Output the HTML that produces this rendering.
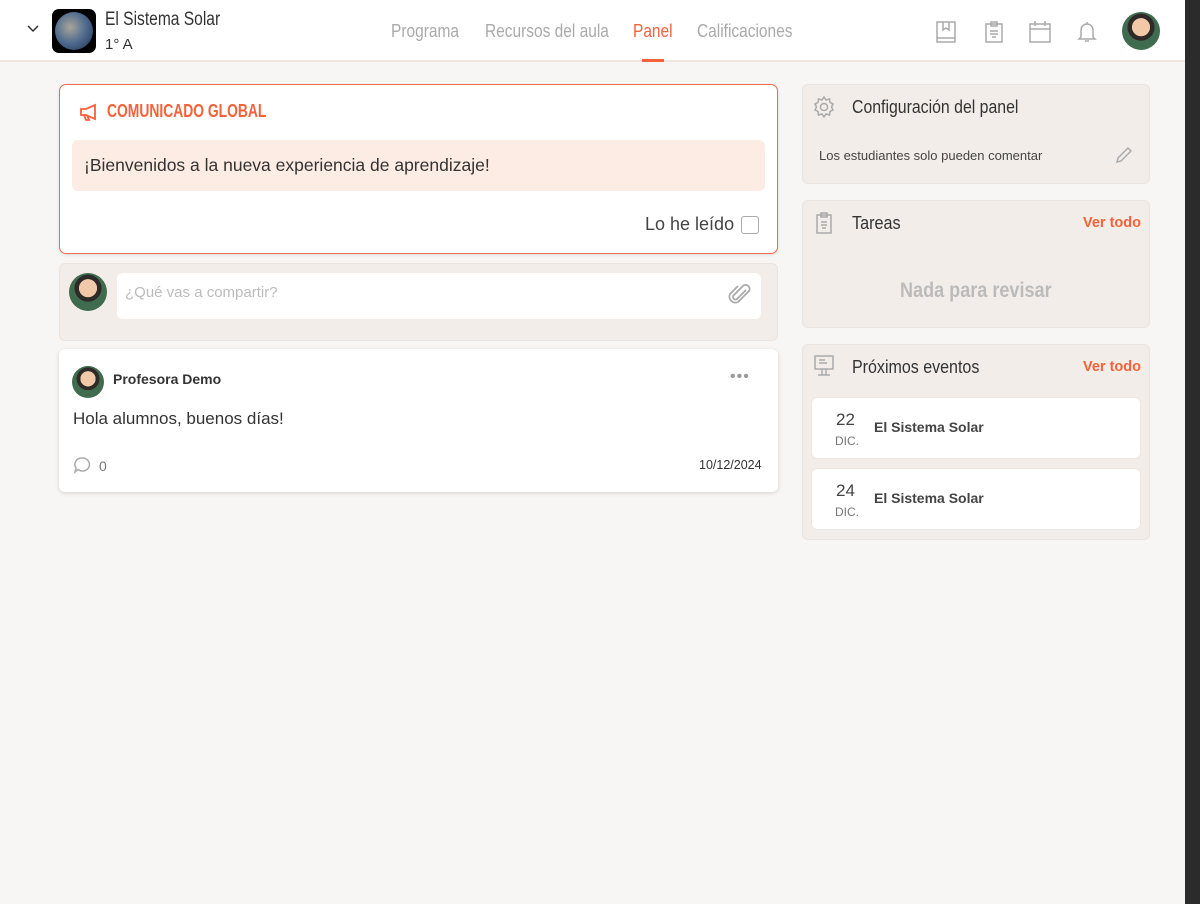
<!DOCTYPE html>
<html><head><meta charset="utf-8"><style>
*{margin:0;padding:0;box-sizing:border-box}
body{width:1200px;height:904px;background:#f8f6f4;font-family:"Liberation Sans",sans-serif;color:#333;position:relative;overflow:hidden}
.n{transform-origin:0 0;white-space:nowrap}
.a{position:absolute}
.hdr{left:0;top:0;width:1185px;height:62px;background:#fff;border-bottom:2px solid #efe6e0}
.strip{left:1185px;top:0;width:15px;height:904px;background:#2b2b2b}
.nav{font-size:18px;color:#aaa;top:21px;transform:scaleX(.86)}
.card{background:#f3ede9;border:1px solid #ebe3de;border-radius:6px}
.wc{background:#fff;border-radius:6px}
.av{border-radius:50%;background:radial-gradient(circle at 50% 40%,#f2c9a8 0 30%,#2e2a28 31% 45%,#3f6b4f 46%);overflow:hidden}
.ico{stroke:#aaa;fill:none;stroke-width:1.5}
.or{color:#f4623a}
</style></head><body>
<div class="a hdr"></div>
<div class="a strip"></div>
<svg class="a" style="left:27px;top:25px" width="12" height="8"><path d="M1 1l5 5 5-5" stroke="#333" stroke-width="1.5" fill="none"/></svg>
<div class="a" style="left:52px;top:9px;width:44px;height:44px;border-radius:7px;background:#000"><div style="margin:3px;width:38px;height:38px;border-radius:50%;background:radial-gradient(circle at 40% 40%,#a8a59a,#4d6a8e 50%,#1f2f4e)"></div></div>
<div class="a n" style="left:105px;top:9px;font-size:19px;color:#333;transform:scaleX(.82)">El Sistema Solar</div>
<div class="a" style="left:105px;top:36px;font-size:15px;color:#333">1° A</div>
<div class="a nav n" style="left:391px">Programa</div>
<div class="a nav n" style="left:485px">Recursos del aula</div>
<div class="a nav n" style="left:633px;color:#f4623a">Panel</div>
<div class="a" style="left:642px;top:59px;width:22px;height:3px;background:#f4623a"></div>
<div class="a nav n" style="left:697px">Calificaciones</div>
<svg class="a ico" style="left:934px;top:20px" width="24" height="24"><path d="M3 2h18v20H3zM3 18h18M9 2v8l3-2 3 2V2"/></svg>
<svg class="a ico" style="left:982px;top:20px" width="24" height="24"><path d="M4 4h16v18H4zM9 2h6v4H9zM8 11h8M8 14h8M10 17h4"/></svg>
<svg class="a ico" style="left:1028px;top:20px" width="24" height="24"><path d="M2 4h20v18H2zM2 9h20M7 1v5M17 1v5"/></svg>
<svg class="a ico" style="left:1075px;top:20px" width="24" height="24"><path d="M6 17V10a6 6 0 0112 0v7l2 2H4zM10 21h4M12 2v2"/></svg>
<div class="a av" style="left:1122px;top:12px;width:38px;height:38px"></div>

<div class="a" style="left:59px;top:84px;width:719px;height:170px;background:#fff;border:1.5px solid #ee6b4d;border-radius:7px;box-shadow:0 1px 3px rgba(0,0,0,.1)"></div>
<svg class="a" style="left:79px;top:103px" width="22" height="18" fill="none" stroke="#f4623a" stroke-width="1.8"><path d="M2 6h5l9-4v14l-9-4H2zM5 12l2 5h3l-2-5"/></svg>
<div class="a n or" style="left:107px;top:101px;font-size:18px;font-weight:bold;transform:scaleX(.77)">COMUNICADO GLOBAL</div>
<div class="a" style="left:72px;top:140px;width:693px;height:51px;background:#fdece4;border-radius:6px"></div>
<div class="a" style="left:84px;top:155px;font-size:17.5px;color:#333">¡Bienvenidos a la nueva experiencia de aprendizaje!</div>
<div class="a" style="left:645px;top:214px;font-size:18px;color:#444">Lo he leído</div>
<div class="a" style="left:741px;top:216px;width:18px;height:18px;border:1.5px solid #aaa;border-radius:3px"></div>

<div class="a card" style="left:59px;top:263px;width:719px;height:78px"></div>
<div class="a av" style="left:69px;top:273px;width:38px;height:38px"></div>
<div class="a" style="left:117px;top:273px;width:644px;height:46px;background:#fff;border-radius:6px"></div>
<div class="a" style="left:125px;top:284px;font-size:15px;color:#bbb">¿Qué vas a compartir?</div>
<svg class="a" style="left:728px;top:282px" width="24" height="26" fill="none" stroke="#aaa" stroke-width="1.8"><path d="M18 8l-9 9a2.5 2.5 0 01-3.5-3.5l10-10a4 4 0 015.5 5.5L10 20a6 6 0 01-8-8l8-8"/></svg>

<div class="a wc" style="left:59px;top:349px;width:719px;height:143px;box-shadow:0 1px 4px rgba(0,0,0,.15)"></div>
<div class="a av" style="left:72px;top:366px;width:32px;height:32px"></div>
<div class="a" style="left:113px;top:371px;font-size:14px;font-weight:bold;color:#333">Profesora Demo</div>
<div class="a" style="left:730px;top:368px;font-size:16px;color:#999;letter-spacing:1px">•••</div>
<div class="a" style="left:73px;top:409px;font-size:17px;color:#333">Hola alumnos, buenos días!</div>
<svg class="a" style="left:73px;top:456px" width="18" height="18" fill="none" stroke="#aaa" stroke-width="1.5"><path d="M9 2a7 6.5 0 11-4 11.5L2 16l1-4A7 6.5 0 019 2z"/></svg>
<div class="a" style="left:99px;top:458px;font-size:14px;color:#777">0</div>
<div class="a" style="left:699px;top:458px;font-size:12.5px;color:#333">10/12/2024</div>

<div class="a card" style="left:802px;top:84px;width:348px;height:100px"></div>
<svg class="a ico" style="left:812px;top:95px" width="24" height="24"><circle cx="12" cy="12" r="3.5"/><path d="M12 2l2 3 3.5-1 .5 3.5 3 1.5-1.5 3 1.5 3-3 1.5-.5 3.5-3.5-1-2 3-2-3-3.5 1-.5-3.5-3-1.5 1.5-3L3 9l3-1.5L6.5 4 10 5z"/></svg>
<div class="a n" style="left:852px;top:97px;font-size:18px;color:#333;transform:scaleX(.88)">Configuración del panel</div>
<div class="a" style="left:819px;top:148px;font-size:13px;color:#444">Los estudiantes solo pueden comentar</div>
<svg class="a ico" style="left:1114px;top:145px" width="20" height="20"><path d="M3 17l1-4L14 3l3 3L7 16z"/></svg>

<div class="a card" style="left:802px;top:200px;width:348px;height:128px"></div>
<svg class="a ico" style="left:814px;top:211px" width="20" height="24"><path d="M3 4h14v18H3zM7 2h6v4H7zM7 11h6M7 14h6M8 17h4"/></svg>
<div class="a n" style="left:852px;top:213px;font-size:18px;color:#333;transform:scaleX(.9)">Tareas</div>
<div class="a or" style="left:1083px;top:215px;font-size:14.5px;font-weight:bold">Ver todo</div>
<div class="a n" style="left:900px;top:279px;font-size:21px;color:#bbb;font-weight:bold;transform:scaleX(.86)">Nada para revisar</div>

<div class="a card" style="left:802px;top:344px;width:348px;height:196px"></div>
<svg class="a ico" style="left:812px;top:354px" width="24" height="24"><path d="M3 2h18v13H3zM7 6h6M7 9h8M10 15v6M14 15v6M6 21h12"/></svg>
<div class="a n" style="left:852px;top:357px;font-size:18px;color:#333;transform:scaleX(.89)">Próximos eventos</div>
<div class="a or" style="left:1083px;top:359px;font-size:14.5px;font-weight:bold">Ver todo</div>
<div class="a wc" style="left:811px;top:397px;width:330px;height:62px;border:1px solid #eee6e0"></div>
<div class="a" style="left:836px;top:410px;font-size:17px;color:#444">22</div>
<div class="a" style="left:835px;top:434px;font-size:12px;color:#777">DIC.</div>
<div class="a" style="left:874px;top:419px;font-size:14px;font-weight:bold;color:#444">El Sistema Solar</div>
<div class="a wc" style="left:811px;top:468px;width:330px;height:62px;border:1px solid #eee6e0"></div>
<div class="a" style="left:836px;top:481px;font-size:17px;color:#444">24</div>
<div class="a" style="left:835px;top:505px;font-size:12px;color:#777">DIC.</div>
<div class="a" style="left:874px;top:490px;font-size:14px;font-weight:bold;color:#444">El Sistema Solar</div>
</body></html>
